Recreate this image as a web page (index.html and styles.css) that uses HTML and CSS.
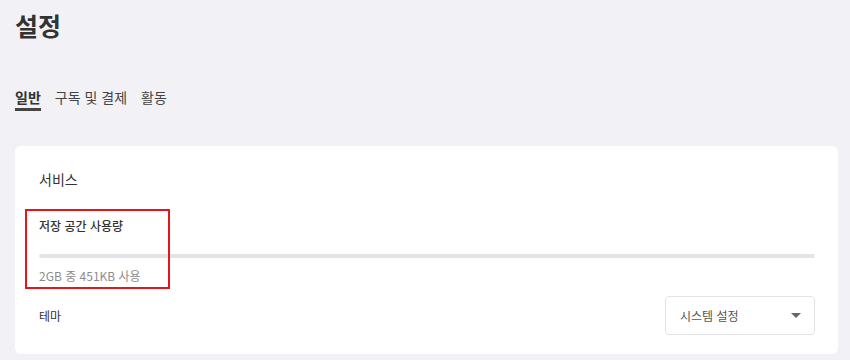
FILE: index.html
```html
<!DOCTYPE html>
<html lang="ko">
<head>
  <meta charset="UTF-8">
  <title>설정</title>
  <link rel="stylesheet" href="styles.css">
</head>
<body>
  <h1 class="titulo">설정</h1>

  <div class="tabs">
    <span class="tab activo">일반</span>
    <span class="tab">구독 및 결제</span>
    <span class="tab">활동</span>
  </div>

  <div class="tarjeta">
    <div class="seccion">서비스</div>

    <div class="almacen">
      <div class="almacen-titulo">저장 공간 사용량</div>
      <div class="barra"></div>
      <div class="almacen-texto">2GB 중 451KB 사용</div>
      <div class="marca"></div>
    </div>

    <div class="fila">
      <span class="fila-label">테마</span>
      <div class="selector">
        <span>시스템 설정</span>
        <span class="flecha"></span>
      </div>
    </div>
  </div>
</body>
</html>
```

FILE: styles.css
```css
body {
  margin: 0;
  padding: 0 12px 0 15px;
  background: #f2f1f6;
  font-family: "Noto Sans CJK KR", "Noto Sans", sans-serif;
  color: #333;
}
.titulo {
  margin: 0;
  padding-top: 5px;
  font-size: 25px;
  line-height: 40px;
  font-weight: 700;
  color: #333;
}
.tabs {
  display: flex;
  gap: 14px;
  margin-top: 41px;
}
.tab {
  font-size: 14px;
  line-height: 22px;
  color: #444;
  border-bottom: 3px solid transparent;
}
.tab.activo {
  font-weight: 700;
  color: #333;
  border-bottom-color: #444;
}
.tarjeta {
  margin-top: 35px;
  background: #fff;
  border-radius: 6px;
  padding: 22px 23px 19px 24px;
}
.seccion {
  font-size: 14px;
  line-height: 22px;
  color: #333;
}
.almacen {
  position: relative;
  margin-top: 26px;
}
.almacen-titulo {
  font-size: 12px;
  line-height: 20px;
  font-weight: 500;
  color: #333;
}
.barra {
  margin-top: 18px;
  height: 4px;
  background: #e4e3e8;
  border-radius: 2px;
}
.almacen-texto {
  margin-top: 8px;
  font-size: 12px;
  line-height: 20px;
  color: #8c8c8c;
}
.marca {
  position: absolute;
  left: -14px;
  top: -7px;
  width: 141px;
  height: 76px;
  border: 2px solid #e8141b;
}
.fila {
  display: flex;
  align-items: center;
  justify-content: space-between;
  margin-top: 10px;
}
.fila-label {
  font-size: 12px;
  line-height: 20px;
  color: #333;
}
.selector {
  box-sizing: border-box;
  width: 150px;
  height: 39px;
  border: 1px solid #e3e3e6;
  border-radius: 4px;
  display: flex;
  align-items: center;
  justify-content: space-between;
  padding: 0 13px 0 14px;
  font-size: 12px;
  color: #555;
}
.flecha {
  width: 0;
  height: 0;
  border-left: 5.5px solid transparent;
  border-right: 5.5px solid transparent;
  border-top: 5.5px solid #666;
}
```
